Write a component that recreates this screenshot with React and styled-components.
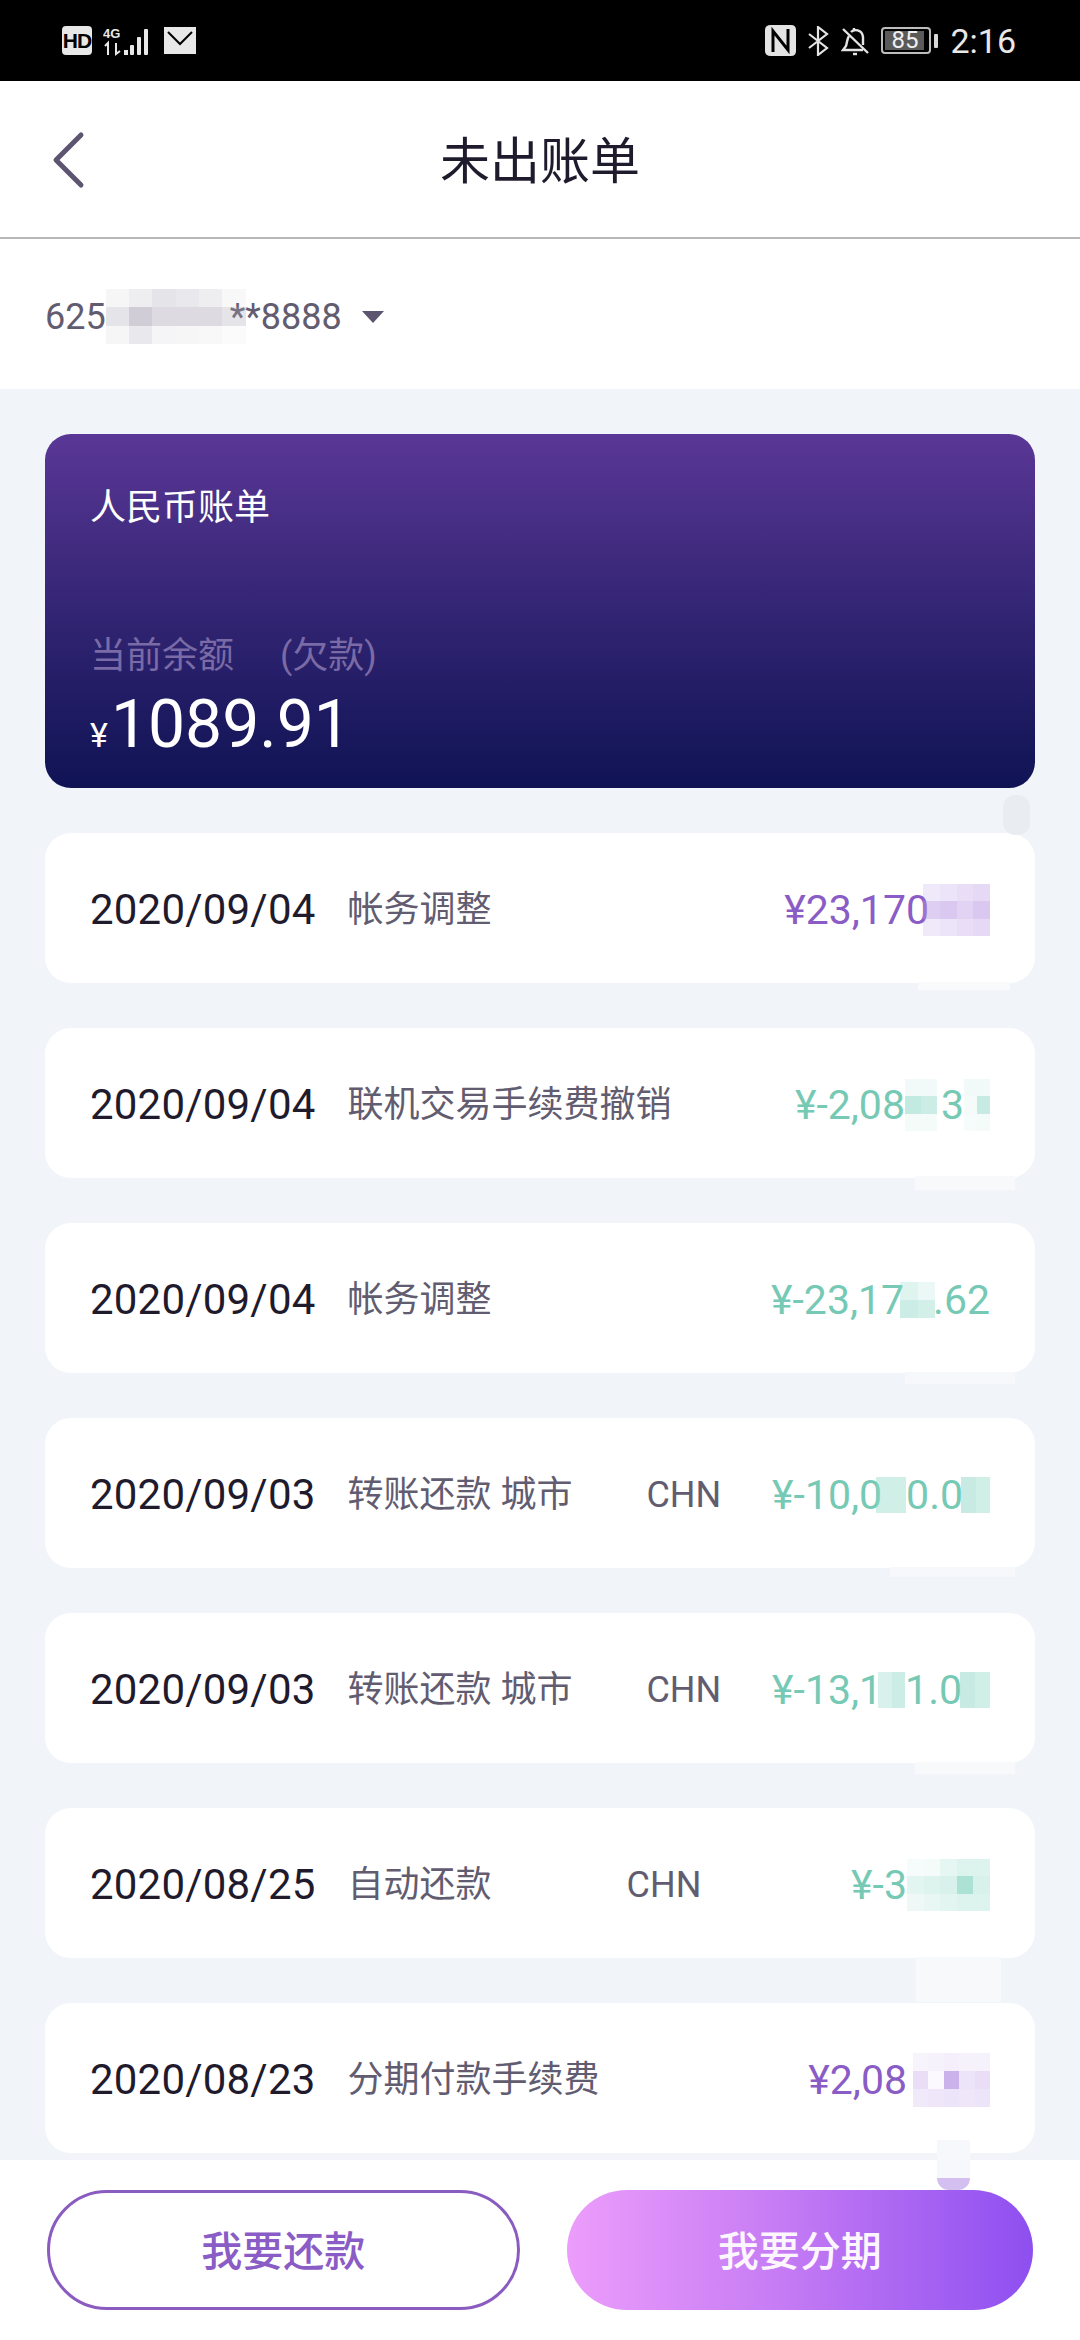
import React from "react";
import styled, { createGlobalStyle } from "styled-components";

const CJK = `Roboto, "Noto Sans CJK SC", sans-serif`;

const GlobalStyle = createGlobalStyle`
  html, body { margin: 0; padding: 0; background: #fff; }
  body { font-family: ${CJK}; }
  * { box-sizing: border-box; }
`;

const Page = styled.div`
  width: 1080px;
  height: 2340px;
  display: flex;
  flex-direction: column;
  overflow: hidden;
  background: #fff;
`;

// status bar
const StatusBar = styled.div`
  height: 81px;
  flex: none;
  background: #000;
  color: #e8e8e8;
  display: flex;
  align-items: center;
  justify-content: space-between;
  padding: 0 64px 0 62px;
`;
const StatusGroup = styled.div`
  display: flex;
  align-items: center;
  gap: ${p => p.$gap}px;
`;
const HdBadge = styled.span`
  width: 30px;
  height: 29px;
  border-radius: 4px;
  background: #e8e8e8;
  color: #000;
  font: 700 21px/29px "Liberation Sans", sans-serif;
  letter-spacing: -1px;
  text-align: center;
`;
const Battery = styled.span`
  width: 50px;
  height: 27px;
  padding: 2px;
  border: 2px solid #bdbdbd;
  border-radius: 4px;
  display: flex;
`;
const BatteryFill = styled.span`
  width: 39px;
  background: #5a5a5a;
  color: #f0f0f0;
  font: 400 24px/19px Roboto, sans-serif;
  text-align: center;
`;
const BatteryNub = styled.span`
  width: 4px;
  height: 14px;
  margin-left: -9px;
  border-radius: 1px;
  background: #d8d8d8;
`;
const Clock = styled.span`
  font: 400 34px/1 Roboto, sans-serif;
`;

// header
const Header = styled.div`
  height: 158px;
  flex: none;
  position: relative;
  display: flex;
  align-items: center;
  justify-content: center;
  padding-top: 5px;
  border-bottom: 2px solid #b8b8b8;
`;
const BackButton = styled.svg`
  position: absolute;
  left: 50px;
  top: 48px;
`;
const Title = styled.h1`
  margin: 0;
  font: 400 50px/1 ${CJK};
  color: #1f1b2d;
`;

const AccountRow = styled.div`
  height: 150px;
  flex: none;
  display: flex;
  align-items: center;
  padding: 5px 45px 0;
  font: 400 36px/1 ${CJK};
  color: #625c70;
`;
const Caret = styled.svg`
  margin-left: 20px;
`;

// list
const Content = styled.div`
  flex: 1;
  min-height: 0;
  position: relative;
  overflow: hidden;
  display: flex;
  flex-direction: column;
  gap: 45px;
  padding: 45px;
  background: #f1f5f9;
`;
const BalanceCard = styled.div`
  height: 354px;
  flex: none;
  border-radius: 26px;
  padding: 53px 45px 0;
  background: linear-gradient(180deg, #5a3796 0%, #2f2370 55%, #0f1354 100%);
  color: #fff;
`;
const CardTitle = styled.div`
  font: 400 36px/42px ${CJK};
`;
const BalanceLabel = styled.div`
  margin-top: 106px;
  display: flex;
  gap: 46px;
  font: 400 36px/42px ${CJK};
  color: #7a6aa6;
`;
const BalanceAmount = styled.div`
  margin-top: 9px;
  display: flex;
  align-items: baseline;
  gap: 3px;
  font: 400 66px/78px Roboto, sans-serif;
`;
const Yen = styled.span`
  font-size: 34px;
`;
const BillRow = styled.div`
  height: 150px;
  flex: none;
  border-radius: 26px;
  background: #fff;
  display: flex;
  align-items: center;
  padding: 4px 45px 0;
`;
const BillDate = styled.span`
  font: 400 42px/1 ${CJK};
  letter-spacing: 0.2px;
  color: #1f1b2d;
  margin-right: 32px;
  white-space: nowrap;
`;
const BillName = styled.span`
  font: 400 36px/1 ${CJK};
  color: #625c70;
  white-space: nowrap;
`;
const BillPlace = styled.span`
  margin-left: ${p => p.$gap}px;
  font: 400 36px/1 ${CJK};
  color: #625c70;
`;
const BillAmount = styled.span`
  margin-left: auto;
  display: flex;
  align-items: center;
  font: 400 41px/1 ${CJK};
  color: ${p => (p.$refund ? "#76c9b4" : "#8a5cc6")};
  white-space: nowrap;
`;

// pixelated privacy patches over the numbers
const Mask = styled.span`
  display: grid;
  grid-template-columns: repeat(${p => p.$cols}, 1fr);
  grid-auto-rows: 1fr;
  flex: none;
  width: ${p => p.$w}px;
  height: ${p => p.$h}px;
  margin: 0 ${p => p.$mr || 0}px 0 ${p => p.$ml || 0}px;
`;
const MaskCell = styled.span`
  background: ${p => p.$color};
  opacity: ${p => p.$alpha};
`;

// faint white smear the patches leave on the page
const Smear = styled.div`
  position: absolute;
  left: ${p => p.$x}px;
  top: ${p => p.$y}px;
  width: ${p => p.$w}px;
  height: ${p => p.$h}px;
  border-radius: ${p => p.$r || 0}px;
  background: ${p => p.$color};
`;
const Drop = styled.div`
  position: absolute;
  left: 937px;
  top: 18px;
  width: 33px;
  height: 12px;
  border-radius: 0 0 16px 16px;
  background: #d4c0f0;
`;

const Footer = styled.div`
  height: 180px;
  flex: none;
  position: relative;
  display: flex;
  gap: 47px;
  padding: 30px 47px 0;
  background: #fff;
`;
const FooterButton = styled.button`
  flex: 1;
  height: 120px;
  padding: 4px 0 0;
  border-radius: 60px;
  font: 500 41px/1 ${CJK};
  border: ${p => (p.$primary ? "none" : "3px solid #8a5cc0")};
  color: ${p => (p.$primary ? "#fdf6ff" : "#8a5cc6")};
  background: ${p =>
    p.$primary ? "linear-gradient(90deg, #ec9dfb 0%, #c67cf4 45%, #8e4ff0 100%)" : "#fff"};
`;

const PURPLE = "#b592e2";
const GREEN = "#8fd8c6";
const GREY = "#a9a4b4";

const patch = (w, h, cols, color, alphas, ml, mr) => ({ w, h, cols, color, alphas, ml, mr });

const bills = [
  {
    date: "2020/09/04",
    name: "帐务调整",
    parts: ["¥23,170", patch(67, 53, 4, PURPLE, [0.2, 0.25, 0.3, 0.35, 0.45, 0.5, 0.4, 0.5, 0.2, 0.25, 0.3, 0.35], -6)],
  },
  {
    date: "2020/09/04",
    name: "联机交易手续费撤销",
    refund: true,
    parts: [
      "¥-2,08",
      patch(32, 53, 2, GREEN, [0.12, 0.12, 0.55, 0.45, 0.1, 0.1], 0, 4),
      "3",
      patch(26, 53, 2, GREEN, [0.12, 0.12, 0.1, 0.5, 0.08, 0.1], 0),
    ],
  },
  {
    date: "2020/09/04",
    name: "帐务调整",
    refund: true,
    parts: ["¥-23,17", patch(35, 36, 2, GREEN, [0.28, 0.18, 0.45, 0.4], -4, -2), ".62"],
  },
  {
    date: "2020/09/03",
    name: "转账还款 城市",
    place: "CHN",
    gap: 74,
    refund: true,
    parts: [
      "¥-10,0",
      patch(30, 36, 2, GREEN, [0.42, 0.42, 0.42, 0.42], -6),
      "0.0",
      patch(29, 36, 2, GREEN, [0.5, 0.42, 0.5, 0.42], -2),
    ],
  },
  {
    date: "2020/09/03",
    name: "转账还款 城市",
    place: "CHN",
    gap: 74,
    refund: true,
    parts: [
      "¥-13,1",
      patch(27, 36, 2, GREEN, [0.35, 0.45, 0.35, 0.45], -4),
      "1.0",
      patch(30, 36, 2, GREEN, [0.5, 0.42, 0.5, 0.42], -2),
    ],
  },
  {
    date: "2020/08/25",
    name: "自动还款",
    place: "CHN",
    gap: 135,
    refund: true,
    parts: [
      "¥-3",
      patch(83, 53, 5, GREEN, [0.08, 0.1, 0.22, 0.3, 0.3, 0.25, 0.3, 0.35, 0.75, 0.35, 0.15, 0.2, 0.25, 0.3, 0.3], 0),
    ],
  },
  {
    date: "2020/08/23",
    name: "分期付款手续费",
    parts: ["¥2,08", patch(77, 54, 5, PURPLE, [0.1, 0.12, 0.15, 0.12, 0.12, 0.3, 0.06, 0.7, 0.25, 0.3, 0.2, 0.22, 0.25, 0.22, 0.25], 6)],
  },
];

const smears = [
  { x: 1003, y: 795, w: 27, h: 40, r: 12, color: "#e9edf2" },
  { x: 918, y: 982, w: 92, h: 8, color: "#f8fafc" },
  { x: 915, y: 1176, w: 100, h: 14, color: "#f7f9fb" },
  { x: 905, y: 1372, w: 110, h: 12, color: "#f6f8fb" },
  { x: 890, y: 1567, w: 125, h: 10, color: "#f6f8fb" },
  { x: 915, y: 1762, w: 100, h: 12, color: "#f7f9fb" },
  { x: 916, y: 1957, w: 85, h: 45, color: "#f7f9fb" },
];

function BackIcon() {
  return (
    <BackButton width="40" height="60" viewBox="0 0 40 60" fill="none">
      <path d="M31 6 L6 31 L31 56" stroke="#5d5470" strokeWidth="5" strokeLinecap="round" strokeLinejoin="round" />
    </BackButton>
  );
}

function SignalIcon() {
  return (
    <svg width="50" height="32" viewBox="0 0 50 32" fill="#e8e8e8">
      <text x="0" y="13" fontFamily="Liberation Sans, sans-serif" fontWeight="700" fontSize="13">4G</text>
      <path d="M2 21 L5 18 L5 30 M13 18 L13 29 L17 26" stroke="#e8e8e8" strokeWidth="2" fill="none" />
      <rect x="21" y="25" width="4" height="5" />
      <rect x="27" y="20" width="4" height="10" rx="1" />
      <rect x="34" y="12" width="4" height="18" rx="1" />
      <rect x="41" y="4" width="4" height="26" rx="1" />
    </svg>
  );
}

function MailIcon() {
  return (
    <svg width="32" height="27" viewBox="0 0 32 27">
      <rect width="32" height="27" fill="#e8e8e8" />
      <path d="M4 5 L16 17 L28 5" stroke="#000" strokeWidth="2" fill="none" />
    </svg>
  );
}

function NfcIcon() {
  return (
    <svg width="31" height="31" viewBox="0 0 31 31">
      <path d="M6 0 H26 Q31 0 31 5 V26 Q31 31 26 31 H6 Q0 31 0 26 V5 Q0 0 6 0 Z" fill="#e4e4e4" />
      <path d="M8 27 V6 L23 25 V4" stroke="#000" strokeWidth="3" fill="none" />
    </svg>
  );
}

function BluetoothIcon() {
  return (
    <svg width="21" height="30" viewBox="0 0 21 30" fill="none">
      <path d="M1 8 L19 22 L10 29 V1 L19 8 L1 22" stroke="#e4e4e4" strokeWidth="2.2" />
    </svg>
  );
}

function BellOffIcon() {
  return (
    <svg width="28" height="30" viewBox="0 0 28 30" fill="none" stroke="#e4e4e4" strokeWidth="2.4">
      <path d="M2 3 L27 27" />
      <path d="M8 10 C6 13 6 17 5 20 L2 24 H22" />
      <path d="M10 6 C13 3 21 3 22 11 L22 19" />
      <path d="M13 2 V4" />
      <path d="M12 28 H16" />
    </svg>
  );
}

function MaskPatch({ w, h, cols, color, alphas, ml, mr }) {
  return (
    <Mask $w={w} $h={h} $cols={cols} $ml={ml} $mr={mr}>
      {alphas.map((a, i) => (
        <MaskCell key={i} $color={color} $alpha={a} />
      ))}
    </Mask>
  );
}

function BillItem({ bill }) {
  return (
    <BillRow>
      <BillDate>{bill.date}</BillDate>
      <BillName>{bill.name}</BillName>
      {bill.place && <BillPlace $gap={bill.gap}>{bill.place}</BillPlace>}
      <BillAmount $refund={bill.refund}>
        {bill.parts.map((part, i) =>
          typeof part === "string" ? <span key={i}>{part}</span> : <MaskPatch key={i} {...part} />
        )}
      </BillAmount>
    </BillRow>
  );
}

export default function App() {
  return (
    <Page>
      <GlobalStyle />
      <StatusBar>
        <StatusGroup $gap={11}>
          <HdBadge>HD</HdBadge>
          <SignalIcon />
          <MailIcon />
        </StatusGroup>
        <StatusGroup $gap={12}>
          <NfcIcon />
          <BluetoothIcon />
          <BellOffIcon />
          <Battery>
            <BatteryFill>85</BatteryFill>
          </Battery>
          <BatteryNub />
          <Clock>2:16</Clock>
        </StatusGroup>
      </StatusBar>

      <Header>
        <BackIcon />
        <Title>未出账单</Title>
      </Header>

      <AccountRow>
        <span>625</span>
        <MaskPatch
          w={140}
          h={56}
          cols={6}
          mr={-16}
          color={GREY}
          alphas={[0.1, 0.2, 0.3, 0.25, 0.2, 0.08, 0.3, 0.55, 0.4, 0.4, 0.4, 0.3, 0.1, 0.25, 0.12, 0.1, 0.08, 0.04]}
        />
        <span>**8888</span>
        <Caret width="22" height="12" viewBox="0 0 22 12">
          <path d="M0 0 H22 L11 12 Z" fill="#5d5470" />
        </Caret>
      </AccountRow>

      <Content>
        <BalanceCard>
          <CardTitle>人民币账单</CardTitle>
          <BalanceLabel>
            <span>当前余额</span>
            <span>(欠款)</span>
          </BalanceLabel>
          <BalanceAmount>
            <Yen>¥</Yen>
            <span>1089.91</span>
          </BalanceAmount>
        </BalanceCard>
        {bills.map((bill, i) => (
          <BillItem key={i} bill={bill} />
        ))}
        {smears.map((s, i) => (
          <Smear key={i} $x={s.x} $y={s.y - 389} $w={s.w} $h={s.h} $r={s.r} $color={s.color} />
        ))}
      </Content>

      <Footer>
        <FooterButton>我要还款</FooterButton>
        <FooterButton $primary>我要分期</FooterButton>
        <Smear $x={937} $y={-20} $w={33} $h={38} $color="#f7f8fb" />
        <Drop />
      </Footer>
    </Page>
  );
}
